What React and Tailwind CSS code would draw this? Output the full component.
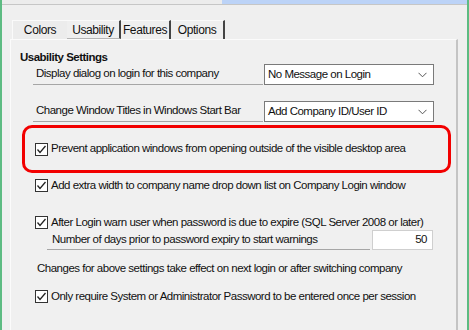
import React from "react";

const font = { fontFamily: '"Liberation Sans", Arial, sans-serif' };

function Check() {
  return (
    <span className="flex h-[13px] w-[13px] shrink-0 items-center justify-center border border-[#333333] bg-white">
      <svg width="11" height="11" viewBox="0 0 11 11">
        <polyline points="1.5,5.5 4,8.5 9.5,2" fill="none" stroke="#222222" strokeWidth="1.3" />
      </svg>
    </span>
  );
}

function Select({ label }) {
  return (
    <div className="flex h-[21px] w-[170px] items-center justify-between border border-[#7a7a7a] bg-white pl-[3px] pr-[6px]">
      <span>{label}</span>
      <svg width="9" height="6" viewBox="0 0 9 6">
        <polyline points="0.5,0.8 4.5,4.8 8.5,0.8" fill="none" stroke="#555555" strokeWidth="1" />
      </svg>
    </div>
  );
}

function CheckRow({ children, className = "" }) {
  return (
    <div className={"flex h-[13px] items-center " + className}>
      <Check />
      <span className="ml-[3px] whitespace-nowrap">{children}</span>
    </div>
  );
}

export default function App() {
  return (
    <div
      style={font}
      className="flex h-[330px] w-[469px] flex-col overflow-hidden border-x-2 border-[#5dbb82] bg-[#efefef] text-[11.5px] tracking-[-0.5px] text-[#111111]"
    >
      <div className="flex h-[5px] border-b border-[#c6c6c6]">
        <div className="w-[220px] bg-[#ececec]" />
        <div className="flex-1 bg-[#bcd3f7]" />
      </div>

      <div className="mt-[15px] flex h-[19px] pl-[10px] text-[12px] tracking-[-0.4px]">
        <div className="flex w-[55px] items-center justify-center border-l border-t border-[#fafafa] bg-[#ececec]">Colors</div>
        <div className="flex w-[54px] items-center justify-center border-r-2 border-t border-b border-r-[#444444] border-t-[#fafafa] border-b-[#b5b5b5] bg-[#efefef]">Usability</div>
        <div className="flex w-[50px] items-center justify-center border-r-2 border-t border-r-[#444444] border-t-[#fafafa]">Features</div>
        <div className="flex w-[54px] items-center justify-center border-r-2 border-t border-r-[#444444] border-t-[#fafafa]">Options</div>
      </div>

      <div className="ml-[8px] mr-[9px] flex flex-1 flex-col border-l border-t border-r-2 border-l-[#fbfbfb] border-t-[#fbfbfb] border-r-[#c4c4c4] bg-[#f0f0f0] pl-[11px] pt-[10px]">
        <div className="ml-[-2px] h-[14px] font-bold leading-[14px]">Usability Settings</div>

        <div className="flex h-[21px] items-center">
          <div className="ml-[11px] flex h-[20px] w-[230px] items-center border-b border-[#a6a6a6] pl-[3px]">Display dialog on login for this company</div>
          <div className="ml-[1px]"><Select label="No Message on Login" /></div>
        </div>

        <div className="mt-[16px] flex h-[21px] items-center">
          <div className="ml-[11px] flex h-[20px] w-[230px] items-center border-b border-[#a6a6a6] pl-[3px]">Change Window Titles in Windows Start Bar</div>
          <div className="ml-[1px]"><Select label="Add Company ID/User ID" /></div>
        </div>

        <div className="mt-[3px] flex h-[48px] w-[429px] items-center rounded-[10px] border-[3px] border-[#f20000] pl-[10px]">
          <CheckRow>Prevent application windows from opening outside of the visible desktop area</CheckRow>
        </div>

        <CheckRow className="ml-[13px] mt-[6px]">Add extra width to company name drop down list on Company Login window</CheckRow>

        <CheckRow className="ml-[13px] mt-[24px]">After Login warn user when password is due to expire (SQL Server 2008 or later)</CheckRow>

        <div className="mt-[1px] flex h-[20px] items-center">
          <div className="ml-[25px] flex h-[19px] w-[323px] items-center border-b border-[#a6a6a6] pl-[5px]">Number of days prior to password expiry to start warnings</div>
          <div className="ml-[2px] flex h-[20px] w-[61px] items-center justify-end border border-[#cfcfcf] bg-white pr-[5px]">50</div>
        </div>

        <div className="ml-[15px] mt-[11px] h-[14px] leading-[14px]">Changes for above settings take effect on next login or after switching company</div>

        <CheckRow className="ml-[13px] mt-[15px]">Only require System or Administrator Password to be entered once per session</CheckRow>
      </div>
    </div>
  );
}
